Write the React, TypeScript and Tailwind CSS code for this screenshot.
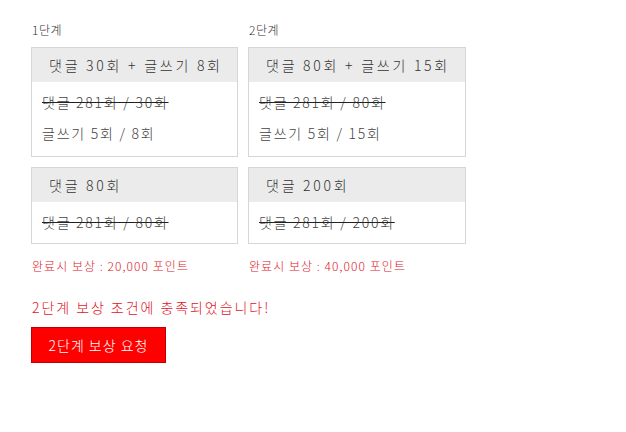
const font = { fontFamily: '"Noto Sans CJK KR", "Noto Sans", sans-serif' };

type Line = { text: string; done: boolean };

type Stage = {
  label: string;
  width: string;
  reward: string;
  main: { title: string; lines: Line[] };
  sub: { title: string; lines: Line[] };
};

const stages: Stage[] = [
  {
    label: "1단계",
    width: "w-[207px]",
    reward: "완료시 보상 : 20,000 포인트",
    main: {
      title: "댓글 30회 + 글쓰기 8회",
      lines: [
        { text: "댓글 281회 / 30회", done: true },
        { text: "글쓰기 5회 / 8회", done: false },
      ],
    },
    sub: {
      title: "댓글 80회",
      lines: [{ text: "댓글 281회 / 80회", done: true }],
    },
  },
  {
    label: "2단계",
    width: "w-[218px]",
    reward: "완료시 보상 : 40,000 포인트",
    main: {
      title: "댓글 80회 + 글쓰기 15회",
      lines: [
        { text: "댓글 281회 / 80회", done: true },
        { text: "글쓰기 5회 / 15회", done: false },
      ],
    },
    sub: {
      title: "댓글 200회",
      lines: [{ text: "댓글 281회 / 200회", done: true }],
    },
  },
];

function MissionBox({ title, lines }: { title: string; lines: Line[] }) {
  return (
    <div className="border border-[#d6d6d6] bg-white">
      <div className="flex h-[34px] items-center bg-[#ebebeb] pl-[17px] text-[14px] font-light tracking-[2.75px] text-[#333]">
        {title}
      </div>
      <div className={`px-[10px] pt-[5px] ${lines.length > 1 ? "pb-[7px]" : "pb-[5px]"}`}>
        {lines.map((line) => (
          <p
            key={line.text}
            className={`text-[14px] font-light leading-[31px] tracking-[1.75px] text-[#444] ${
              line.done ? "line-through decoration-[#222]" : ""
            }`}
          >
            {line.text}
          </p>
        ))}
      </div>
    </div>
  );
}

export default function App() {
  return (
    <div className="min-h-[432px] bg-white px-[31px] pt-[21px]" style={font}>
      <div className="flex items-start gap-[10px]">
        {stages.map((stage) => (
          <div key={stage.label} className={`flex flex-col ${stage.width}`}>
            <span className="pl-[1px] text-[12px] font-light leading-[18px] tracking-[0.5px] text-[#333]">
              {stage.label}
            </span>
            <div className="mt-[8px]">
              <MissionBox {...stage.main} />
            </div>
            <div className="mt-[10px]">
              <MissionBox {...stage.sub} />
            </div>
            <span className="mt-[13px] pl-[1px] text-[12px] font-light leading-[18px] tracking-[1.05px] text-[#e0141e]">
              {stage.reward}
            </span>
          </div>
        ))}
      </div>

      <p className="mt-[22px] pl-[1px] text-[14px] font-light leading-[20px] tracking-[1.95px] text-[#e0141e]">
        2단계 보상 조건에 충족되었습니다!
      </p>

      <button className="mt-[10px] flex h-[36px] w-[135px] items-center justify-center border border-[#c00000] bg-[#ff0000] text-[14px] font-light tracking-[1px] text-white">
        2단계 보상 요청
      </button>
    </div>
  );
}
